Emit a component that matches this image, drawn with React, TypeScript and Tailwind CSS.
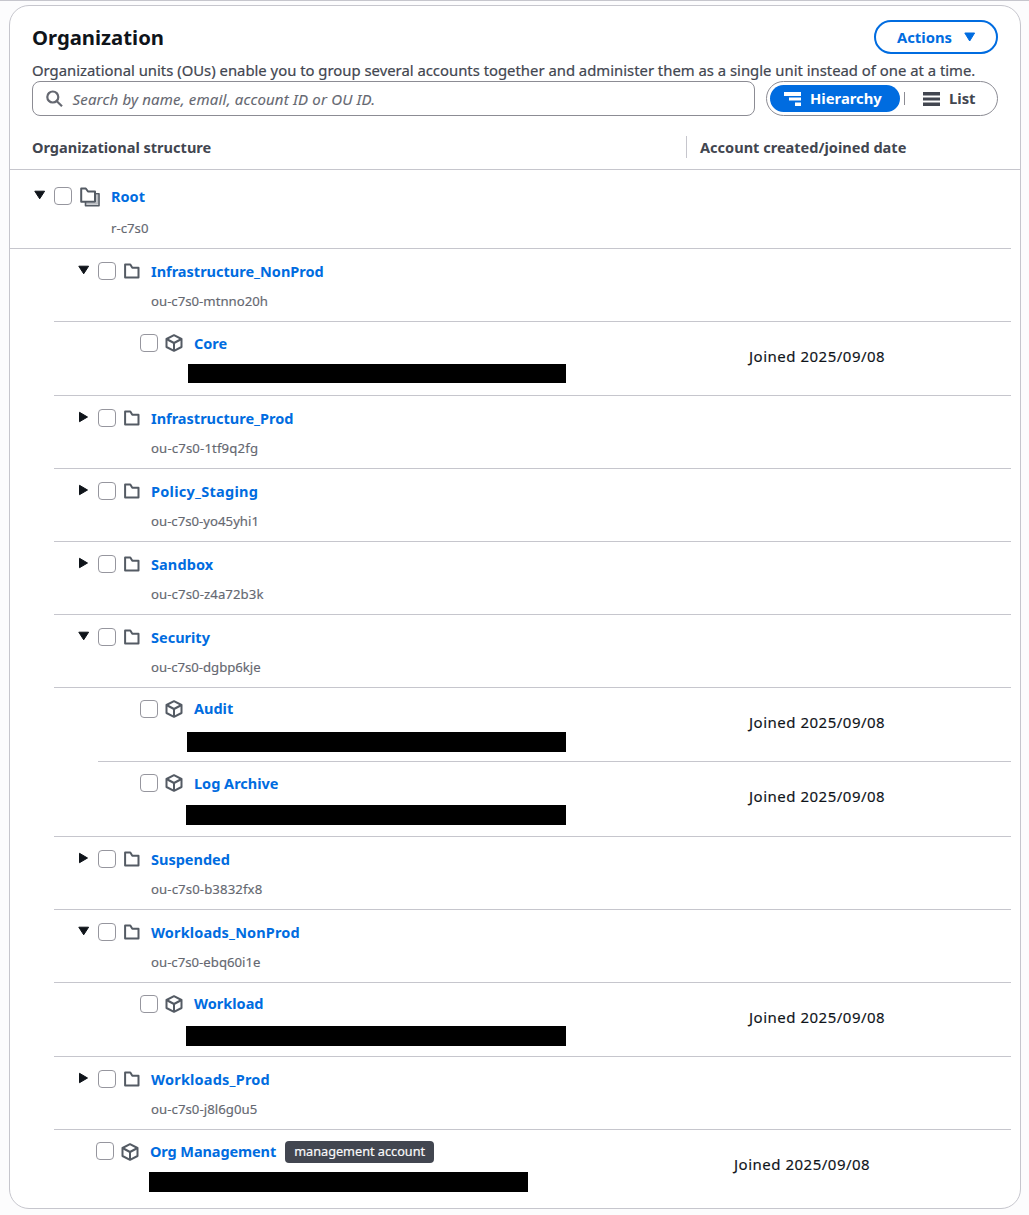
import React from "react";

type Item = {
  name: string;
  kind: "root" | "ou" | "account" | "management";
  id?: string;
  open?: boolean;
  row: string;
  pad?: string;
  bar?: string;
  date?: boolean;
  track?: string;
  idTrack?: string;
};

const OU_ROW = "ml-11 h-[73px] border-b";

const ITEMS: Item[] = [
  { name: "Root", kind: "root", id: "r-c7s0", open: true, row: "h-[79px] border-b" },
  { name: "Infrastructure_NonProd", kind: "ou", id: "ou-c7s0-mtnno20h", open: true, row: OU_ROW },
  { name: "Core", kind: "account", row: "ml-11 h-[74px] border-b", pad: "pl-[86px] pt-[10px]", bar: "ml-[134px] mt-[10px] h-[19px] w-[378px]", date: true },
  { name: "Infrastructure_Prod", kind: "ou", id: "ou-c7s0-1tf9q2fg", row: OU_ROW, idTrack: "tracking-[0.13px]" },
  { name: "Policy_Staging", kind: "ou", id: "ou-c7s0-yo45yhi1", row: OU_ROW, track: "tracking-[0.26px]" },
  { name: "Sandbox", kind: "ou", id: "ou-c7s0-z4a72b3k", row: OU_ROW, track: "tracking-[0.1px]", idTrack: "tracking-[0.08px]" },
  { name: "Security", kind: "ou", id: "ou-c7s0-dgbp6kje", open: true, row: OU_ROW, idTrack: "tracking-[-0.04px]" },
  { name: "Audit", kind: "account", row: "ml-[88px] h-[74px] border-b", pad: "pl-[42px] pt-[10px]", bar: "ml-[89px] mt-[12px] h-5 w-[379px]", date: true, track: "relative -top-px" },
  { name: "Log Archive", kind: "account", row: "ml-11 h-[75px] border-b", pad: "pl-[86px] pt-[10px]", bar: "ml-[132px] mt-[11px] h-5 w-[380px]", date: true },
  { name: "Suspended", kind: "ou", id: "ou-c7s0-b3832fx8", row: OU_ROW, idTrack: "tracking-[0.1px]" },
  { name: "Workloads_NonProd", kind: "ou", id: "ou-c7s0-ebq60i1e", open: true, row: OU_ROW, track: "tracking-[0.14px]" },
  { name: "Workload", kind: "account", row: "ml-11 h-[74px] border-b", pad: "pl-[86px] pt-[10px]", bar: "ml-[132px] mt-[11px] h-5 w-[380px]", date: true, track: "relative -top-px" },
  { name: "Workloads_Prod", kind: "ou", id: "ou-c7s0-j8l6g0u5", row: OU_ROW, track: "tracking-[0.2px]", idTrack: "tracking-[0.05px]" },
  { name: "Org Management", kind: "management", row: "ml-11 h-[78px]", pad: "pl-[42px] pt-[10px]", bar: "ml-[95px] mt-[10px] h-5 w-[379px]", date: true, track: "tracking-[-0.1px]" },
];

function Caret({ open }: { open?: boolean }) {
  return (
    <svg className="h-3 w-3 shrink-0 fill-[#0f141a] stroke-[#0f141a]" viewBox="0 0 12 12" strokeLinejoin="round" strokeWidth="1">
      {open ? <path d="M0.8 2.200h9.800L5.700 9.800Z" /> : <path d="M1.500 1.300v9.400L9.500 6Z" />}
    </svg>
  );
}

function Checkbox() {
  return <span className="h-[18px] w-[17.500px] shrink-0 rounded-[4px] border border-[#96969e] bg-white" />;
}

function Folder() {
  return (
    <svg className="h-4 w-4 shrink-0" viewBox="0 0 16 16" fill="none" stroke="#545b64" strokeWidth="2" strokeLinejoin="round">
      <path d="M1.100 1.500h5.200l2 3.200h6.200v9.800H1.100Z" />
    </svg>
  );
}

function Folders() {
  return (
    <svg className="h-5 w-5 shrink-0" viewBox="0 0 20 20" fill="none" stroke="#545b64" strokeLinejoin="round">
      <path d="M5.500 16.800h11.700V7.500" stroke="#b9bcc1" strokeWidth="2" />
      <path d="M5.500 15v3.700h13.500V6.700H16" strokeWidth="1.600" />
      <path d="M1.200 1.500h4.600l2.200 3h7v10.200H1.200Z" strokeWidth="2" />
    </svg>
  );
}

function Cube() {
  return (
    <svg className="h-[18px] w-[18px] shrink-0" viewBox="0 0 18 18" fill="none" stroke="#545b64" strokeWidth="2" strokeLinejoin="round">
      <path d="M9 1.200 16.500 5v8L9 16.800 1.500 13V5Z" />
      <path d="m1.500 5 7.500 4 7.500-4M9 9v7.800" />
    </svg>
  );
}

function Name({ children, track = "" }: { children: React.ReactNode; track?: string }) {
  return <a className={`text-[14.500px] leading-5 font-bold whitespace-nowrap text-[#006ce0] ${track}`}>{children}</a>;
}

function Row({ item }: { item: Item }) {
  const { kind, name, id, open, track, idTrack = "" } = item;
  return (
    <div className={`mr-[9px] flex shrink-0 justify-between border-[#c6c6cd] ${item.row}`}>
      {kind === "root" && (
        <div className="pt-4 pl-6">
          <div className="flex h-5 items-center">
            <span className="-mt-[2px] flex"><Caret open={open} /></span>
            <span className="ml-2 flex"><Checkbox /></span>
            <span className="mt-[2px] ml-[8.500px] flex"><Folders /></span>
            <span className="ml-[11px] flex"><Name track={track}>{name}</Name></span>
          </div>
          <div className="mt-3 ml-[77px] text-[13.200px] leading-5 text-[#656871] [-webkit-text-stroke:0.15px]">{id}</div>
        </div>
      )}
      {kind === "ou" && (
        <div className="pt-3 pl-6">
          <div className="flex h-5 items-center">
            <span className="-mt-[3px] flex"><Caret open={open} /></span>
            <span className="ml-2 flex"><Checkbox /></span>
            <span className="ml-[8.500px] flex"><Folder /></span>
            <span className="ml-[11px] flex"><Name track={track}>{name}</Name></span>
          </div>
          <div className={`mt-[10px] ml-[73px] text-[13.200px] leading-5 text-[#656871] [-webkit-text-stroke:0.15px] ${idTrack}`}>{id}</div>
        </div>
      )}
      {(kind === "account" || kind === "management") && (
        <div className="w-[600px]">
          <div className={`flex h-8 items-center ${item.pad}`}>
            <Checkbox />
            <span className={`ml-[7.500px] flex ${kind === "management" ? "mt-px" : ""}`}><Cube /></span>
            <span className="ml-[11px] flex"><Name track={track}>{name}</Name></span>
            {kind === "management" && (
              <span className="mt-px ml-[9px] flex h-[22px] w-[149px] items-center justify-center rounded-[4px] bg-[#424650] pt-px text-[12.700px] whitespace-nowrap text-[#f9f9fb] [-webkit-text-stroke:0.2px]">
                management account
              </span>
            )}
          </div>
          <div className={`bg-black ${item.bar}`} />
        </div>
      )}
      {item.date && (
        <div className={`pt-[22px] text-[15px] leading-6 tracking-[0.500px] whitespace-nowrap text-[#0f141a] [-webkit-text-stroke:0.15px] ${kind === "management" ? "w-[277px]" : "w-[262px]"}`}>
          Joined 2025/09/08
        </div>
      )}
    </div>
  );
}

export default function App() {
  return (
    <main className="h-[1215px] w-[1029px] overflow-hidden border-t border-[#c6c6cd] bg-[#fcfcfd] pt-1 pr-2 pl-[9px] font-['Noto_Sans',sans-serif]">
      <section className="flex h-[1204px] w-[1012px] flex-col rounded-[20px] border border-[#c6c6cd] bg-white">
        <header className="h-[126px] shrink-0 px-[22px]">
          <div className="flex h-12 items-end justify-between">
            <h1 className="mb-[3px] text-[20.300px] leading-7 font-bold text-[#0f141a]">Organization</h1>
            <button className="flex h-[34px] w-[124px] items-center rounded-full border-2 border-[#006ce0] pl-[21px] text-[14.800px] font-bold text-[#006ce0]">
              Actions
              <svg className="ml-3 h-3 w-3" viewBox="0 0 12 12" fill="#006ce0" stroke="#006ce0" strokeLinejoin="round"><path d="M0.8 2h9.800L5.700 10Z" /></svg>
            </button>
          </div>
          <p className="mt-[5px] h-[22px] text-[14.850px] leading-[22px] whitespace-nowrap text-[#424650] [-webkit-text-stroke:0.2px]">
            Organizational units (OUs) enable you to group several accounts together and administer them as a single unit instead of one at a time.
          </p>
          <div className="flex justify-between">
            <div className="flex h-[35px] w-[723px] items-center rounded-[8px] border border-[#8c8c94] bg-white pl-[13px]">
              <svg className="h-[17px] w-[17px]" viewBox="0 0 17 17" fill="none" stroke="#656871" strokeWidth="2.200"><circle cx="6.800" cy="7" r="5.500" /><path d="m10.600 11 5.400 5.200" /></svg>
              <span className="mt-px ml-[9.500px] text-[15px] tracking-[0.180px] text-[#656871] italic [-webkit-text-stroke:0.1px]">Search by name, email, account ID or OU ID.</span>
            </div>
            <div className="flex h-[35px] w-[232px] items-center rounded-full border border-[#8c8c94] bg-white pl-[3px] text-[14.800px] font-bold">
              <div className="flex h-[27px] w-[130px] items-center rounded-full bg-[#006ce0] pl-[14px] text-white">
                <svg className="h-[14px] w-[17px]" viewBox="0 0 17 14" fill="white"><path d="M0 0h17v4H0zM5 5.500h12v3H5zM11 10.500h6V14h-6z" /></svg>
                <span className="ml-[9px]">Hierarchy</span>
              </div>
              <span className="ml-1 h-[13px] w-px bg-[#8c8c94]" />
              <svg className="ml-[18px] h-[14px] w-[17px]" viewBox="0 0 17 14" fill="#424650"><path d="M0 0h17v3.500H0zM0 5.500h17v3H0zM0 10.500h17V14H0z" /></svg>
              <span className="ml-[9px] text-[#424650]">List</span>
            </div>
          </div>
        </header>
        <div className="flex h-[38px] shrink-0 border-b border-[#c6c6cd] pl-[22px] text-[14.550px] leading-[22px] font-bold text-[#424650]">
          <div className="w-[654px] pt-[4px]">Organizational structure</div>
          <div className="mt-[4px] h-[22px] border-l border-[#c6c6cd] pl-[13px]">Account created/joined date</div>
        </div>
        {ITEMS.map((item) => <Row key={item.name} item={item} />)}
      </section>
    </main>
  );
}
